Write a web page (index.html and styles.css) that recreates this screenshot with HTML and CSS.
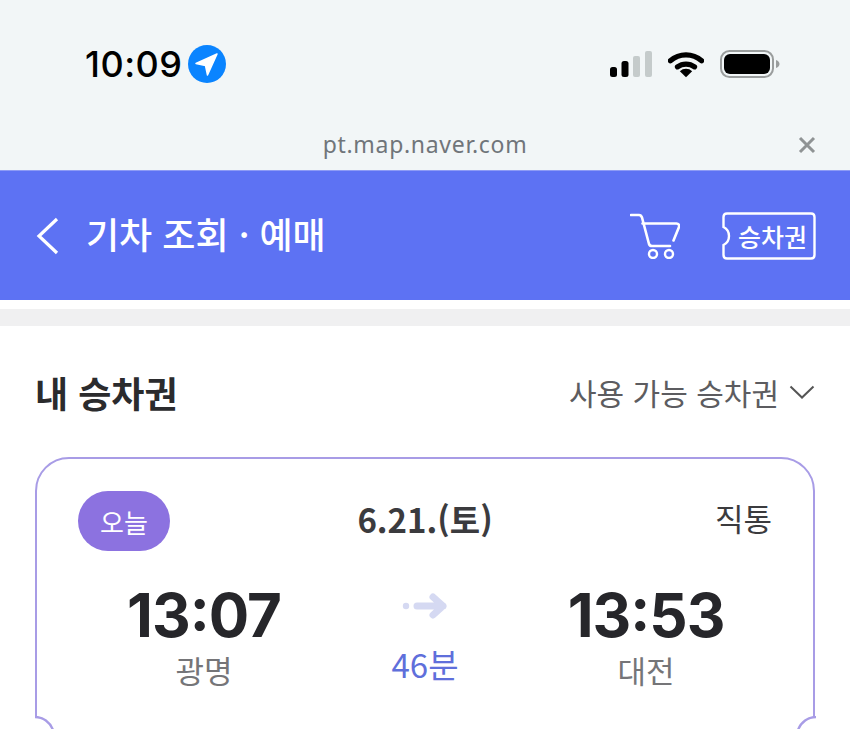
FILE: index.html
```html
<!DOCTYPE html>
<html lang="ko">
<head>
<meta charset="utf-8">
<title>기차 조회 · 예매</title>
<link rel="stylesheet" href="styles.css">
</head>
<body>
<div class="page">
  <div class="chrome">
    <div class="status">
      <div class="clock">
        <span class="time">10:09</span>
        <svg class="loc" viewBox="0 0 38 38" width="38" height="38"><circle cx="19" cy="19" r="19" fill="#0a84ff"/><path d="M29 9 L8 18.500 L17.500 20.500 L19.500 30 Z" fill="#fff" stroke="#fff" stroke-width="1.500" stroke-linejoin="round"/></svg>
      </div>
      <div class="sys">
        <svg class="signal" viewBox="0 0 42 26" width="42" height="26"><rect x="0" y="16" width="7" height="10" rx="2.500" fill="#000"/><rect x="11.500" y="10" width="7" height="16" rx="2.500" fill="#000"/><rect x="23" y="5" width="7" height="21" rx="2" fill="#c5cbcb"/><rect x="35" y="0" width="7" height="26" rx="2" fill="#c5cbcb"/></svg>
        <svg class="wifi" viewBox="0 0 38 28" width="36" height="27"><path d="M2.500 10 A25 25 0 0 1 35.500 10" fill="none" stroke="#000" stroke-width="5.500" stroke-linecap="round"/><path d="M10 16.500 A15 15 0 0 1 28 16.500" fill="none" stroke="#000" stroke-width="5.500" stroke-linecap="round"/><path d="M19 27.500 L12.500 21 A9.500 9.500 0 0 1 25.500 21 Z" fill="#000"/></svg>
        <svg class="batt" viewBox="0 0 60 28" width="60" height="28"><rect x="1" y="1" width="52" height="26" rx="8.500" fill="none" stroke="#9a9d9d" stroke-width="2"/><rect x="4" y="4" width="46" height="20" rx="6" fill="#000"/><path d="M56 10 C58.500 11 59.500 12.500 59.500 14 C59.500 15.500 58.500 17 56 18 Z" fill="#9a9d9d"/></svg>
      </div>
    </div>
    <div class="urlbar">
      <span class="url">pt.map.naver.com</span>
      <svg class="close" viewBox="0 0 18 18" width="18" height="18"><path d="M2 2 L16 16 M16 2 L2 16" stroke="#8f9394" stroke-width="3"/></svg>
    </div>
  </div>
  <header class="appbar">
    <div class="appbar-left">
      <svg class="back" viewBox="0 0 24 38" width="24" height="38"><path d="M21 2 L3 19 L21 36" fill="none" stroke="#fff" stroke-width="3.200"/></svg>
      <h1 class="title">기차 조회 · 예매</h1>
    </div>
    <div class="appbar-right">
      <svg class="cart" viewBox="0 0 50 46" width="50" height="46"><path d="M1 2 H9 C10.500 2 11.500 3 12 4.500 L19 31 C19.500 32.500 20.500 33 22 33 H40 M12.500 10.500 H46.500 C48.500 10.500 49.500 12 49 14 L43.500 27.500" fill="none" stroke="#fff" stroke-width="2.600" stroke-linecap="round" stroke-linejoin="round"/><circle cx="23" cy="41" r="4" fill="none" stroke="#fff" stroke-width="2.400"/><circle cx="39" cy="41" r="4" fill="none" stroke="#fff" stroke-width="2.400"/></svg>
      <div class="ticket-btn">
        <svg class="ticket-shape" viewBox="0 0 94 48" width="94" height="48"><path d="M5 1.500 H89 C91 1.500 92.500 3 92.500 5 V43 C92.500 45 91 46.500 89 46.500 H5 C3 46.500 1.500 45 1.500 43 V33 C5.500 31 7 27.500 7 24 C7 20.500 5.500 17 1.500 15 V5 C1.500 3 3 1.500 5 1.500 Z" fill="none" stroke="#fff" stroke-width="2.400"/></svg>
        <span class="ticket-label">승차권</span>
      </div>
    </div>
  </header>
  <div class="divider"></div>
  <main class="content">
    <div class="section-head">
      <h2 class="section-title">내 승차권</h2>
      <div class="filter">
        <span>사용 가능 승차권</span>
        <svg viewBox="0 0 26 14" width="26" height="14"><path d="M1.500 1.500 L13 12.500 L24.500 1.500" fill="none" stroke="#555" stroke-width="2"/></svg>
      </div>
    </div>
    <article class="card">
      <div class="card-top">
        <span class="badge">오늘</span>
        <span class="date">6.21.(토)</span>
        <span class="kind">직통</span>
      </div>
      <div class="route">
        <div class="stop">
          <span class="stop-time">13:07</span>
          <span class="stop-name">광명</span>
        </div>
        <div class="duration">
          <svg viewBox="0 0 46 28" width="46" height="28"><circle cx="4" cy="14" r="3.200" fill="#d5d9f2"/><path d="M15 14 H41 M31 5 L41 14 L31 23" fill="none" stroke="#d5d9f2" stroke-width="7" stroke-linecap="round" stroke-linejoin="round"/></svg>
          <span class="duration-text">46분</span>
        </div>
        <div class="stop">
          <span class="stop-time">13:53</span>
          <span class="stop-name">대전</span>
        </div>
      </div>
      <svg class="notch notch-l" viewBox="0 0 24 16" width="24" height="16"><path d="M0 1 C8 1 15 6 18 14 L18 16 L0 16 Z" fill="#fff"/><path d="M0 1 C8 1 15 6 18 14" fill="none" stroke="#a89ce6" stroke-width="2.400"/></svg>
      <svg class="notch notch-r" viewBox="0 0 24 16" width="24" height="16"><path d="M24 1 C16 1 9 6 6 14 L6 16 L24 16 Z" fill="#fff"/><path d="M24 1 C16 1 9 6 6 14" fill="none" stroke="#a89ce6" stroke-width="2.400"/></svg>
    </article>
  </main>
</div>
</body>
</html>
```

FILE: styles.css
```css
* { box-sizing: border-box; }
html, body { margin: 0; padding: 0; height: 100%; overflow: hidden; background: #fff; }
body { font-family: "Noto Sans CJK KR", "Noto Sans", sans-serif; color: #2b2b2d; }
.page { width: 850px; height: 729px; overflow: hidden; display: flex; flex-direction: column; }

.chrome { height: 170px; background: #f2f6f7; display: flex; flex-direction: column; flex: none; }
.status { height: 127px; padding: 44px 70px 0 85px; display: flex; justify-content: space-between; align-items: flex-start; }
.clock { display: flex; align-items: center; gap: 5px; }
.time { font-family: Inter, sans-serif; font-size: 36px; font-weight: 500; line-height: 40px; color: #000; letter-spacing: 0.5px; }
.sys { display: flex; align-items: center; gap: 16px; padding-top: 6px; }
.urlbar { flex: 1; position: relative; display: flex; justify-content: center; align-items: flex-start; padding-top: 2px; }
.url { font-family: "Noto Sans", sans-serif; font-size: 23px; line-height: 30px; color: #70757a; letter-spacing: 0.7px; }
.close { position: absolute; right: 34px; top: 9px; }

.appbar { height: 130px; background: #5d72f3; flex: none; display: flex; justify-content: space-between; align-items: center; padding: 0 34px 0 36px; color: #fff; border-top: 1px solid #8d9bf5; }
.appbar-left { display: flex; align-items: center; gap: 26px; }
.title { margin: 0; padding-bottom: 6px; font-size: 36px; font-weight: 500; line-height: 44px; }
.appbar-right { display: flex; align-items: center; gap: 42px; }
.ticket-btn { position: relative; width: 94px; height: 48px; display: flex; align-items: center; justify-content: center; padding-left: 7px; }
.ticket-shape { position: absolute; left: 0; top: 0; }
.ticket-label { position: relative; font-size: 25px; font-weight: 500; line-height: 30px; }

.divider { flex: none; height: 26px; border-top: 9px solid #fff; background: #f0f0f1; }

.content { flex: 1; padding: 44px 35px 0; }
.section-head { display: flex; justify-content: space-between; align-items: center; height: 44px; }
.section-title { margin: 0; font-size: 36px; font-weight: 700; line-height: 44px; color: #2b2b2d; }
.filter { display: flex; align-items: center; gap: 10px; font-size: 30px; line-height: 36px; color: #5c5c60; }

.card { position: relative; margin-top: 43px; height: 320px; border: 2.500px solid #a89ce6; border-radius: 34px; padding: 32px 41px 0; }
.card-top { display: grid; grid-template-columns: 1fr auto 1fr; align-items: center; }
.badge { justify-self: start; width: 92px; height: 60px; border-radius: 30px; background: #8c72e0; color: #fff; font-size: 26px; font-weight: 400; display: flex; align-items: center; justify-content: center; }
.date { padding-bottom: 4px; font-size: 33px; font-weight: 700; color: #3b3b3e; line-height: 44px; }
.kind { justify-self: end; padding-bottom: 6px; font-size: 31px; color: #3b3b3e; line-height: 40px; }
.route { display: grid; grid-template-columns: repeat(3, 221px); justify-content: center; margin-top: 33px; }
.stop, .duration { display: flex; flex-direction: column; align-items: center; }
.stop-time { font-family: Inter, sans-serif; font-feature-settings: "case"; font-size: 60px; font-weight: 700; line-height: 62px; letter-spacing: -1px; color: #26262a; }
.stop-name { margin-top: 2px; font-size: 31px; line-height: 44px; color: #757578; }
.duration { padding-top: 8px; gap: 23px; }
.duration-text { font-size: 33px; line-height: 42px; color: #5f6fdb; }
.notch { position: absolute; }
.notch-l { left: -2.500px; top: 257px; }
.notch-r { right: -2.500px; top: 257px; }
```
